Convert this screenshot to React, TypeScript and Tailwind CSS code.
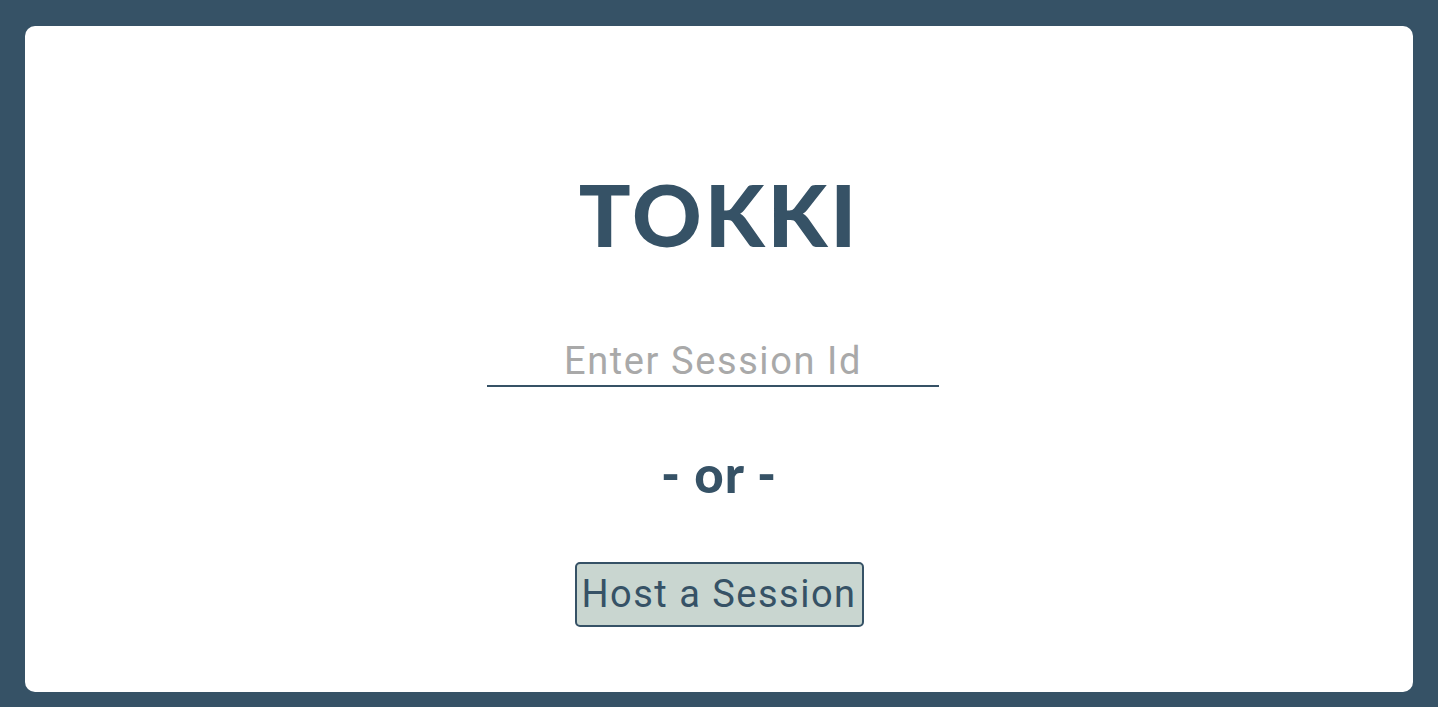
export default function App() {
  return (
    <div className="flex h-[707px] w-full bg-[#365266] px-[25px] pt-[26px] pb-[15px]">
      <main className="flex flex-1 flex-col items-center rounded-[10px] bg-white pt-[145px]">
        <h1 className="font-['Lato',sans-serif] text-[86px] font-black leading-none tracking-[3px] text-[#365266]">
          TOKKI
        </h1>
        <input
          type="text"
          placeholder="Enter Session Id"
          className="mt-[82px] mr-[12px] w-[452px] border-b-2 border-[#365266] bg-transparent pb-[2px] text-center font-['Roboto',sans-serif] text-[38px] leading-[44px] tracking-[1.6px] text-[#365266] outline-none placeholder:text-[#a9a9a9]"
        />
        <p className="mt-[61px] font-['Lato',sans-serif] text-[51px] font-black leading-none tracking-[1px] text-[#365266]">
          - or -
        </p>
        <button className="mt-[63px] h-[65px] w-[289px] rounded-[5px] border-2 border-[#365266] bg-[#c9d6d0] font-['Roboto',sans-serif] text-[38px] tracking-[1.5px] text-[#365266]">
          Host a Session
        </button>
      </main>
    </div>
  )
}
